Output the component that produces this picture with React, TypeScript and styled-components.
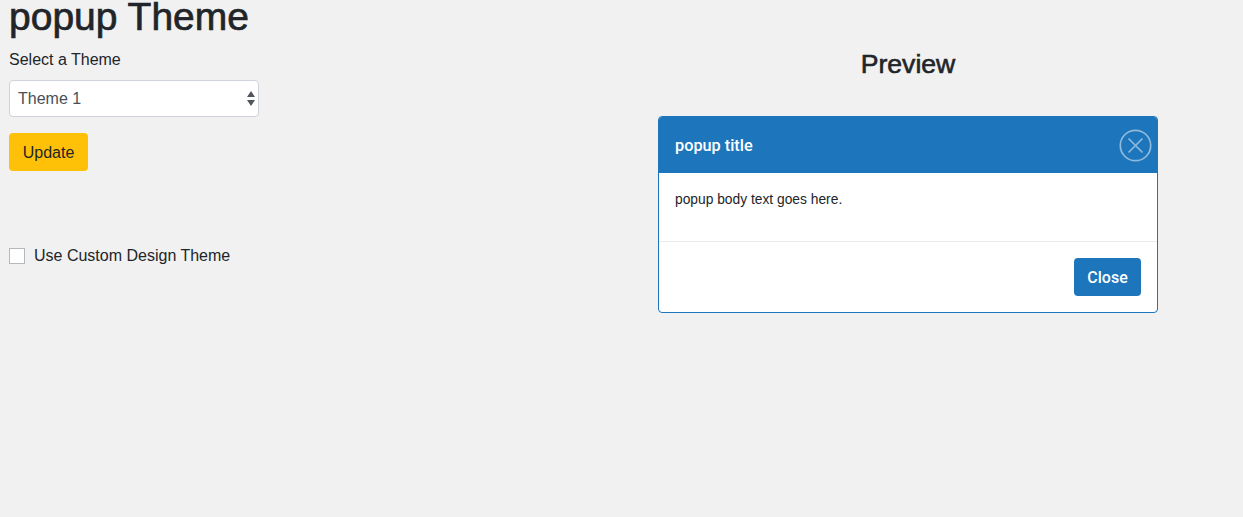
import styled, { createGlobalStyle } from "styled-components";

const GlobalStyle = createGlobalStyle`
  html, body {
    margin: 0;
    padding: 0;
    height: 100%;
    overflow: hidden;
    background: #f1f1f1;
  }
  body {
    font-family: "Liberation Sans", Arial, sans-serif;
    color: #212529;
  }
`;

const Page = styled.div`
  display: grid;
  grid-template-columns: 250px 500px;
  justify-content: space-between;
  padding: 0 85px 0 9px;
  height: 517px;
  overflow: hidden;
`;

const Settings = styled.div`
  display: flex;
  flex-direction: column;
  align-items: flex-start;
`;

const Heading = styled.h1`
  margin: 0 0 15px;
  font-size: 39px;
  font-weight: 400;
  line-height: 33px;
  white-space: nowrap;
  -webkit-text-stroke: 0.7px #212529;
`;

const FieldLabel = styled.label`
  font-size: 16px;
  line-height: 24px;
`;

const SelectWrap = styled.div`
  position: relative;
  width: 250px;
  margin-top: 8px;
`;

const ThemeSelect = styled.select`
  display: block;
  width: 100%;
  height: 37px;
  padding: 0 8px;
  appearance: none;
  background: #fff;
  border: 1px solid #ced4da;
  border-radius: 4px;
  color: #495057;
  font-family: inherit;
  font-size: 16px;
`;

const SelectArrows = styled.svg`
  position: absolute;
  top: 11px;
  right: 4px;
  width: 8px;
  height: 15px;
  pointer-events: none;
`;

const UpdateButton = styled.button`
  width: 79px;
  height: 38px;
  margin-top: 16px;
  padding: 1px 0 0;
  background: #ffc107;
  border: 0;
  border-radius: 4px;
  color: #212529;
  font-family: inherit;
  font-size: 16px;
`;

const CheckRow = styled.label`
  display: flex;
  align-items: center;
  gap: 9px;
  margin-top: 73px;
  font-size: 16px;
  line-height: 24px;
`;

const CheckBox = styled.input`
  width: 16px;
  height: 16px;
  margin: 0;
  appearance: none;
  background: #fff;
  border: 1px solid #b4b9be;
`;

const PreviewColumn = styled.div`
  display: flex;
  flex-direction: column;
`;

const PreviewTitle = styled.h3`
  margin: 47px 0 0;
  font-size: 26.6px;
  font-weight: 400;
  line-height: 34px;
  text-align: center;
  -webkit-text-stroke: 0.6px #212529;
`;

const Modal = styled.div`
  margin-top: 35px;
  height: 197px;
  box-sizing: border-box;
  display: flex;
  flex-direction: column;
  background: #fff;
  border: 1px solid #1d75bb;
  border-radius: 4px;
  overflow: hidden;
`;

const ModalHeader = styled.div`
  display: flex;
  align-items: center;
  justify-content: space-between;
  height: 56px;
  padding: 0 5px 0 16px;
  background: #1d75bb;
  color: #fff;
`;

const ModalTitle = styled.span`
  font-family: Roboto, sans-serif;
  font-size: 16.3px;
  font-weight: 500;
`;

const CloseIcon = styled.svg`
  width: 33px;
  height: 33px;
  margin-top: 1px;
`;

const ModalBody = styled.div`
  height: 69px;
  padding: 17px 16px 0;
  box-sizing: border-box;
  border-bottom: 1px solid #e9ecef;
  color: #212529;
  font-size: 13.8px;
  line-height: 20px;
`;

const ModalFooter = styled.div`
  display: flex;
  justify-content: flex-end;
  padding: 16px;
`;

const CloseButton = styled.button`
  width: 67px;
  height: 38px;
  padding: 0;
  background: #1d75bb;
  border: 0;
  border-radius: 4px;
  color: #fff;
  font-family: Roboto, sans-serif;
  font-size: 16px;
  font-weight: 500;
`;

export default function App(): JSX.Element {
  return (
    <>
      <GlobalStyle />
      <Page>
        <Settings>
          <Heading>popup Theme</Heading>
          <FieldLabel htmlFor="theme">Select a Theme</FieldLabel>
          <SelectWrap>
            <ThemeSelect id="theme" defaultValue="1">
              <option value="1">Theme 1</option>
              <option value="2">Theme 2</option>
            </ThemeSelect>
            <SelectArrows viewBox="0 0 8 15">
              <path d="M4 0 8 6H0Z M0 9H8L4 15Z" fill="#50565c" />
            </SelectArrows>
          </SelectWrap>
          <UpdateButton>Update</UpdateButton>
          <CheckRow>
            <CheckBox type="checkbox" />
            Use Custom Design Theme
          </CheckRow>
        </Settings>
        <PreviewColumn>
          <PreviewTitle>Preview</PreviewTitle>
          <Modal>
            <ModalHeader>
              <ModalTitle>popup title</ModalTitle>
              <CloseIcon viewBox="0 0 33 33" fill="none" stroke="#fff" strokeOpacity="0.5" strokeWidth="1.7">
                <circle cx="16.5" cy="16.5" r="15.2" />
                <path d="M9.5 9.5 23.5 23.5M23.5 9.5 9.5 23.5" />
              </CloseIcon>
            </ModalHeader>
            <ModalBody>popup body text goes here.</ModalBody>
            <ModalFooter>
              <CloseButton>Close</CloseButton>
            </ModalFooter>
          </Modal>
        </PreviewColumn>
      </Page>
    </>
  );
}
